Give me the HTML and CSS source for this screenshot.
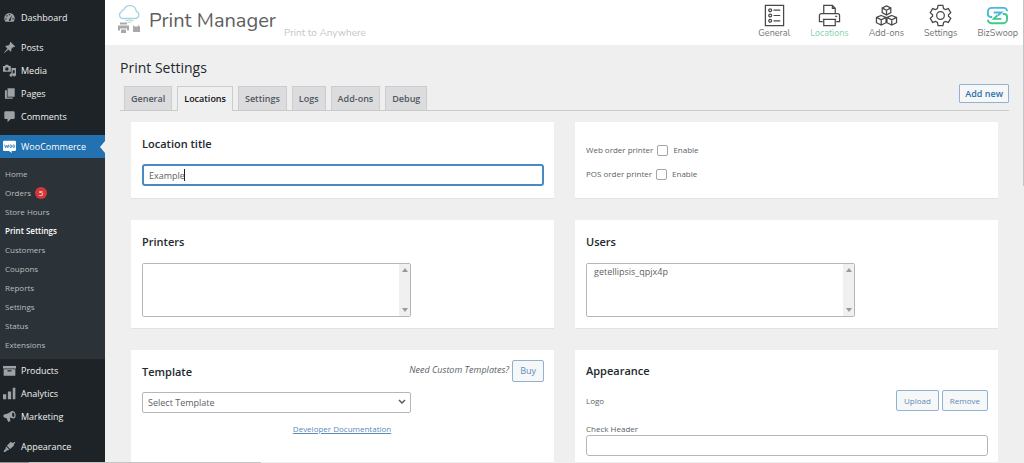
FILE: index.html
```html
<!DOCTYPE html>
<html lang="en">
<head>
<meta charset="utf-8">
<title>Print Settings</title>
<link rel="stylesheet" href="styles.css">
</head>
<body>
<div class="shell">
  <nav class="sidebar" aria-label="Admin menu">
    <a class="item" href="#"><svg viewBox="0 0 20 20"><path d="M10 3a8 8 0 0 0-8 8c0 2 .7 4 2 5.500h12c1.300-1.500 2-3.500 2-5.500a8 8 0 0 0-8-8z"/><path class="cut" d="M9 14l5-8-2.500 9a1.500 1.500 0 0 1-2.500-1zM5 6.500h2v2H5zM9 4.500h2v2H9zM3.500 11h2v2h-2zM14.500 11h2v2h-2z"/></svg>Dashboard</a>
    <div class="gap"></div>
    <a class="item" href="#"><svg viewBox="0 0 20 20"><path d="M10.400 3l1-1.800 7.400 7.400-1.800 1-1.300-.4-3 3c.4 1.600.2 3.200-.9 4.400L8.500 13.200 2 18.500l-.500-.500L6.800 11.500 3.400 8.200c1.200-1.100 2.800-1.300 4.400-.9l3-3z"/></svg>Posts</a>
    <a class="item" href="#"><svg viewBox="0 0 20 20"><path fill-rule="evenodd" d="M0 3h3l1-2h4l1 2h3v9H0zM6 5a2.600 2.600 0 1 0 0 5.200A2.600 2.600 0 0 0 6 5z"/><path d="M13 6h7v10.500a2.500 2.500 0 1 1-2-2.400V9.500h-3V17a2.500 2.500 0 1 1-2-2.400z"/></svg>Media</a>
    <a class="item" href="#"><svg viewBox="0 0 20 20"><path d="M7 2h11v13H7z"/><path d="M3 5h3v11h9v2H3z"/></svg>Pages</a>
    <a class="item" href="#"><svg viewBox="0 0 20 20"><path d="M4 2h12a2 2 0 0 1 2 2v8a2 2 0 0 1-2 2h-4l-5 5v-5H4a2 2 0 0 1-2-2V4a2 2 0 0 1 2-2z"/></svg>Comments</a>
    <div class="gap"></div>
    <a class="item current" href="#"><svg viewBox="0 0 20 20"><path class="white" d="M2 1h16a2 2 0 0 1 2 2v12a2 2 0 0 1-2 2h-5l1 3-5-3H2a2 2 0 0 1-2-2V3a2 2 0 0 1 2-2z"/><path class="woo" d="M2.500 7l1.500 5 2-4 1.500 4 1.500-5M12 7.500a1.300 2.200 0 1 0 .1 0zM16.500 7.500a1.300 2.200 0 1 0 .1 0z"/></svg>WooCommerce</a>
    <div class="submenu">
      <a href="#">Home</a>
      <a href="#">Orders <span class="count">5</span></a>
      <a href="#">Store Hours</a>
      <a href="#" class="active">Print Settings</a>
      <a href="#">Customers</a>
      <a href="#">Coupons</a>
      <a href="#">Reports</a>
      <a href="#">Settings</a>
      <a href="#">Status</a>
      <a href="#">Extensions</a>
    </div>
    <a class="item" href="#"><svg viewBox="0 0 20 20"><path d="M0 3h20v4H0z"/><path fill-rule="evenodd" d="M1 8h18v10H1zM7 9.500v2h6v-2z"/></svg>Products</a>
    <a class="item" href="#"><svg viewBox="0 0 20 20"><path d="M0 11h5v8H0zM7.500 7h5v12h-5zM15 1h4v18h-4z"/></svg>Analytics</a>
    <a class="item" href="#"><svg viewBox="0 0 20 20"><path fill-rule="evenodd" d="M15 1.500c3 0 4.500 4 4.500 6.500s-1 5-3 5c-2.500 0-4-1.500-6-1.500l1 5.500-3.500 1.500-2.500-6C2 12.500.500 11 .500 9S2 6.500 5 6c5-1 7-4.500 10-4.500zM15.500 4c-1 0-1.800 1.500-1.500 3.500s1.200 3.500 2.300 3.300 1.500-1.800 1.200-3.600S16.500 4 15.500 4z"/></svg>Marketing</a>
    <div class="gap"></div>
    <a class="item" href="#"><svg viewBox="0 0 20 20"><path d="M12 2.500l2.500 2 4-1.500.500 1-2.500 3 .5 1.500-6 5.500-5-5zM5 10l4.500 4.500c-1 1.500-2.500 1-3.500 1.500S3.500 18.500 2 18.500 1 16 2.500 15s1.500-1.500 1.500-2.500S4.500 10.500 5 10z"/></svg>Appearance</a>
  </nav>

  <main class="main">
    <header class="topbar">
      <svg class="logo" viewBox="0 0 24 30">
        <path class="cloud" d="M6 14.500h12.500a3.700 3.700 0 0 0 .8-7.200A6.500 6.500 0 0 0 7 5.300a3.600 3.600 0 0 0-2.600 2.600A3.500 3.500 0 0 0 6 14.500z"/>
        <path class="wave" d="M8.500 16.800q4-1.500 8 0M10.500 18.200h4"/>
        <path class="gray" fill-rule="evenodd" d="M3 18.500h7v2H3zM1 21.500h11v5H10V24.500H3v2H1zM4 25.500h5v3.500H4zM16.500 21l1 1.500h3l1-1.500 1.500 2v5h-7v-5z"/>
      </svg>
      <span class="brand">Print Manager</span>
      <span class="tagline">Print to Anywhere</span>
      <nav class="tools" aria-label="Print Manager">
        <a href="#"><svg viewBox="0 0 24 24"><path d="M2.500 1.500h19v21h-19z"/><circle cx="7.500" cy="6.500" r="1.500"/><circle cx="7.500" cy="12" r="1.500"/><circle cx="7.500" cy="17.500" r="1.500"/><path d="M11 6.500h7M11 12h7M11 17.500h7"/></svg>General</a>
        <a href="#" class="on"><svg viewBox="0 0 24 24"><path d="M6 10V1.500h9l3 3V10M15 1.500v3h3M5 18.500H1.500V12a2 2 0 0 1 2-2h17a2 2 0 0 1 2 2v6.500H19M5 16h14M6 16v6.500h12V16M18 13h2"/></svg>Locations</a>
        <a href="#"><svg viewBox="0 0 24 24"><path d="M12 2l4.500 2v5L12 11.500 7.500 9V4zM7.500 4L12 6.500 16.500 4M12 6.500v5M6.500 12l5 2v5.500l-5 2.500-5-2.500V14zM1.500 14l5 2.500 5-2.500M6.500 16.500V22M17.500 12l5 2v5.500l-5 2.500-5-2.500V14zM12.500 14l5 2.500 5-2.500M17.500 16.500V22"/></svg>Add-ons</a>
        <a href="#"><svg viewBox="0 0 24 24"><path d="M9.500 1.500h5l.7 3.200 2 1.100 3-1 2.500 4.300-2.400 2.200v1.400l2.400 2.200-2.500 4.300-3-1-2 1.100-.7 3.200h-5l-.7-3.200-2-1.100-3 1-2.500-4.300 2.400-2.200v-1.400L1.300 9.100l2.500-4.300 3 1 2-1.100z"/><circle cx="12" cy="12" r="4"/></svg>Settings</a>
        <a href="#"><svg class="swoop" viewBox="0 0 24 24"><path class="blue" d="M6.500 13.500H5a3 3 0 0 1-3-3V8a4 4 0 0 1 4-4h12.500A3.500 3.500 0 0 1 22 7.500M8 8.800h8L12.500 12"/><path class="green" d="M17.500 10.500H19a3 3 0 0 1 3 3V16a4 4 0 0 1-4 4H5.500A3.500 3.500 0 0 1 2 16.500M12 11.800l-3.800 3.700H16"/></svg>BizSwoop</a>
      </nav>
    </header>

    <div class="content">
      <h1>Print Settings</h1>
      <div class="tabs">
        <a href="#">General</a>
        <a href="#" class="selected">Locations</a>
        <a href="#">Settings</a>
        <a href="#">Logs</a>
        <a href="#">Add-ons</a>
        <a href="#">Debug</a>
        <button class="btn add" type="button">Add new</button>
      </div>

      <form class="cards">
        <section class="card">
          <h2><label for="title">Location title</label></h2>
          <div class="field">
            <input class="text focused" id="title" type="text" value="Example">
            <span class="caret"></span>
          </div>
        </section>
        <section class="card checks">
          <div class="check"><span>Web order printer</span><input type="checkbox" id="web"><label for="web">Enable</label></div>
          <div class="check"><span>POS order printer</span><input type="checkbox" id="pos"><label for="pos">Enable</label></div>
        </section>
        <section class="card">
          <h2><label for="printers">Printers</label></h2>
          <div class="listbox">
            <select id="printers" multiple size="3"></select>
            <div class="scroll"><svg viewBox="0 0 6 4"><path d="M0 4l3-4 3 4z"/></svg><svg viewBox="0 0 6 4"><path d="M0 0l3 4 3-4z"/></svg></div>
          </div>
        </section>
        <section class="card">
          <h2><label for="users">Users</label></h2>
          <div class="listbox">
            <select id="users" multiple size="3"><option>getellipsis_qpjx4p</option></select>
            <div class="scroll"><svg viewBox="0 0 6 4"><path d="M0 4l3-4 3 4z"/></svg><svg viewBox="0 0 6 4"><path d="M0 0l3 4 3-4z"/></svg></div>
          </div>
        </section>
        <section class="card tall">
          <div class="head">
            <h2><label for="template">Template</label></h2>
            <em>Need Custom Templates?</em>
            <button class="btn" type="button">Buy</button>
          </div>
          <div class="dropdown">
            <select id="template"><option>Select Template</option></select>
            <svg viewBox="0 0 8 6"><path d="M1 1l3 3 3-3"/></svg>
          </div>
          <div class="docs"><a href="#">Developer Documentation</a></div>
        </section>
        <section class="card tall">
          <h2>Appearance</h2>
          <div class="logo-row">
            <span>Logo</span>
            <button class="btn" type="button">Upload</button>
            <button class="btn" type="button">Remove</button>
          </div>
          <label class="above" for="header">Check Header</label>
          <input class="text" id="header" type="text">
        </section>
      </form>
    </div>
  </main>
  <div class="vbar"></div>
</div>
<div class="hbar"></div>
</body>
</html>
```
FILE: styles.css
```css
* { box-sizing: border-box; }
body {
  margin: 0;
  height: 100vh;
  display: flex;
  flex-direction: column;
  overflow: hidden;
  background: #efeff0;
  color: #5b5f64;
  font: 9px/12px "Open Sans", "Noto Sans", sans-serif;
}
a { color: inherit; text-decoration: none; }
h1, h2 { margin: 0; color: #23282d; }
input, select, button { font: inherit; color: inherit; margin: 0; }

.shell { flex: 1; min-height: 0; display: flex; overflow: hidden; }

/* Admin menu */
.sidebar {
  flex: none;
  width: 105px;
  padding-top: 6px;
  background: #1d2327;
  color: #f0f0f1;
  overflow: hidden;
}
.item {
  position: relative;
  display: flex;
  align-items: center;
  gap: 5px;
  height: 23px;
  padding-left: 3px;
}
.item svg { width: 13px; height: 13px; fill: #9ca2a7; }
.item .cut { fill: #1d2327; }
.item .white { fill: #fff; }
.item .woo { fill: none; stroke: #2271b1; stroke-width: 1.2; }
.gap { height: 7px; }
.current { background: #2271b1; color: #fff; }
.current::after {
  content: "";
  position: absolute;
  right: 0;
  top: 6px;
  border: 6px solid transparent;
  border-left: 0;
  border-right: 5px solid #efeff0;
}
.submenu { padding: 6px 0 5px; background: #2c3338; color: #b9bcbf; font-size: 8px; }
.submenu a {
  display: flex;
  align-items: center;
  gap: 4px;
  height: 19px;
  padding-left: 5px;
}
.submenu .active { color: #fff; font-weight: 600; }
.count {
  width: 12px;
  height: 12px;
  border-radius: 6px;
  background: #d63638;
  color: #fff;
  text-align: center;
}

/* Plugin header */
.main { flex: 1; min-width: 0; }
.topbar {
  display: flex;
  height: 45px;
  padding: 0 5px 0 12px;
  background: #fff;
}
.logo { width: 24px; height: 30px; margin-top: 4px; }
.cloud { fill: none; stroke: #a5d3e2; stroke-width: 1.3; }
.wave { fill: none; stroke: #a9dcc0; stroke-width: 1; }
.gray { fill: #a9a9a9; }
.brand {
  margin: 7px 8px 0;
  color: #5e5e5e;
  font: 20px/28px Nunito, "Open Sans", sans-serif;
}
.tagline {
  margin-top: 26px;
  color: #c6c6c6;
  font: 10px/14px Nunito, "Open Sans", sans-serif;
}
.tools {
  display: flex;
  gap: 20px;
  margin-left: auto;
  color: #757575;
  font: 9px/12px Nunito, "Open Sans", sans-serif;
}
.tools a { display: flex; flex-direction: column; align-items: center; padding-top: 4px; }
.tools svg { width: 23px; height: 23px; fill: none; stroke: #484848; stroke-width: 1.3; }
.tools .on { color: #8bd3ae; }
.tools .blue { stroke: #4db8dc; stroke-width: 2; }
.tools .green { stroke: #3fc98b; stroke-width: 2; }

/* Page */
.content { padding: 13px 14px 0 15px; }
h1 { font-size: 14px; line-height: 20px; font-weight: 400; }
.tabs {
  display: flex;
  align-items: flex-end;
  gap: 5px;
  height: 33px;
  padding-left: 4px;
  border-bottom: 1px solid #c9cacc;
}
.tabs a {
  height: 24px;
  padding: 0 6px;
  border: 1px solid #cbccce;
  border-bottom: 0;
  background: #dcdcde;
  color: #50575e;
  font-weight: 600;
  line-height: 24px;
}
.tabs .selected { height: 25px; margin-bottom: -1px; background: #efeff0; color: #111; }
.btn {
  height: 21px;
  padding: 0 7px;
  border: 1px solid #8fb2d5;
  border-radius: 2px;
  background: #f6f7f7;
  color: #5b8bbd;
  line-height: 18px;
}
.add { height: 19px; margin: 0 0 7px auto; padding: 0 5px; border-radius: 1px; color: #2f70aa; font-weight: 600; }

.cards {
  display: grid;
  grid-template-columns: 1fr 1fr;
  gap: 21px;
  padding: 11px 11px 0;
}
.card {
  min-height: 77px;
  padding: 14px 10px 11px 11px;
  background: #fff;
  border-bottom: 1px solid #e2e3e4;
}
.card h2 { font-size: 11px; line-height: 16px; font-weight: 600; }
.field { position: relative; margin-top: 12px; }
.text {
  display: block;
  width: 100%;
  height: 21px;
  padding: 0 6px;
  border: 1px solid #b4b6b9;
  border-radius: 3px;
  background: #fff;
}
.focused { height: 22px; border: 2px solid #4a8ac4; padding: 0 5px; outline: none; }
.caret { position: absolute; left: 42px; top: 5px; width: 1px; height: 12px; background: #222; }

.checks { display: flex; flex-direction: column; gap: 12px; padding-top: 22px; font-size: 8px; }
.check { display: flex; align-items: center; height: 12px; }
.check input {
  appearance: none;
  width: 11px;
  height: 11px;
  margin: 0 5px 0 4px;
  border: 1px solid #a3a5a9;
  border-radius: 2px;
  background: #fff;
}

.listbox {
  display: flex;
  width: 67%;
  height: 54px;
  margin-top: 13px;
  border: 1px solid #b4b6b9;
  border-radius: 2px;
}
.listbox select {
  appearance: none;
  flex: 1;
  min-width: 0;
  height: 100%;
  padding: 1px 5px;
  border: 0;
  background: #fff;
  overflow: hidden;
  outline: none;
}
.scroll {
  width: 11px;
  padding: 4px 0;
  background: #f0f0f0;
  display: flex;
  flex-direction: column;
  justify-content: space-between;
  align-items: center;
}
.scroll svg { width: 6px; height: 4px; fill: #9a9a9a; }

.tall { height: 180px; }
.head { display: flex; gap: 3px; margin-top: -4px; }
.head h2 { margin: 4px auto 0 0; }
.head em { margin-top: 4px; }
.head .btn { height: 22px; }
.dropdown { position: relative; width: 67%; margin-top: 10px; }
.dropdown select {
  appearance: none;
  display: block;
  width: 100%;
  height: 21px;
  padding: 0 5px;
  border: 1px solid #b4b6b9;
  border-radius: 2px;
  background: #fff;
}
.dropdown svg {
  position: absolute;
  right: 5px;
  top: 7px;
  width: 8px;
  height: 6px;
  fill: none;
  stroke: #50575e;
  stroke-width: 1.4;
  pointer-events: none;
}
.docs { width: 62%; margin-top: 10px; text-align: right; color: #5b8bbd; font-size: 8px; }
.docs a { text-decoration: underline; }
.tall > h2 { margin-top: -1px; }
.logo-row { display: flex; align-items: center; gap: 3px; margin-top: 11px; font-size: 8px; }
.logo-row span { margin-right: auto; }
.above { display: block; margin-top: 12px; font-size: 8px; }

.vbar { flex: none; width: 1px; height: 186px; background: #c4c4c4; }
.hbar { flex: none; height: 1px; background: linear-gradient(90deg, #8f8f8f 29px, #c4c4c4 29px, #c4c4c4 261px, #efeff0 261px); }
```
